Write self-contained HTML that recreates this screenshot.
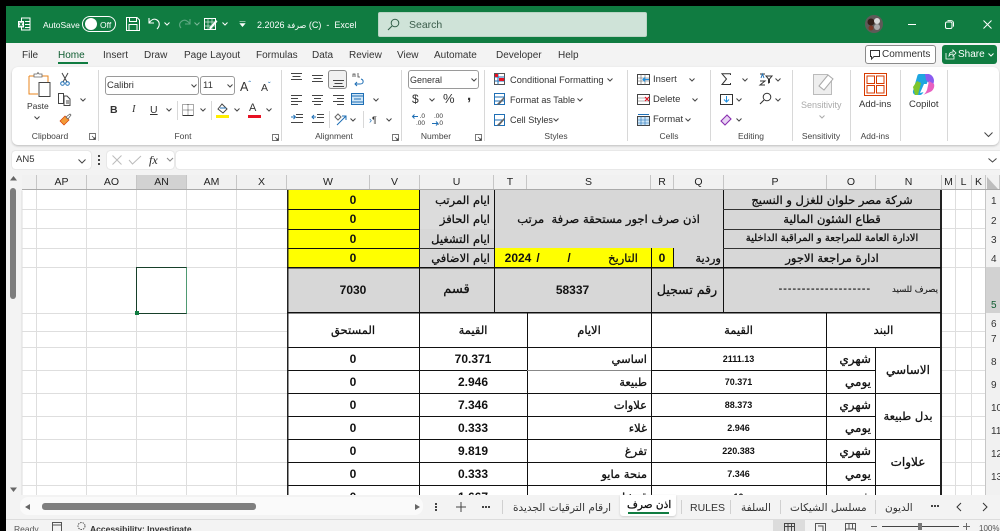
<!DOCTYPE html>
<html lang="en"><head><meta charset="utf-8"><title>Excel</title>
<style>
html,body{margin:0;padding:0;width:1000px;height:531px;overflow:hidden;background:#f3f3f3}
body{position:relative;font-family:"Liberation Sans",sans-serif;color:#222}
.a{position:absolute}
.t{position:absolute;white-space:nowrap;line-height:12px;font-size:9.5px;color:#333}
.m{position:absolute;white-space:nowrap;top:50px;line-height:12px;font-size:10px;color:#333}
.g{position:absolute;white-space:nowrap;top:131px;line-height:11px;font-size:8.5px;color:#444;transform:translateX(-50%)}
.s{position:absolute;width:1px;top:70px;height:71px;background:#d8d8d8}
.h{position:absolute;top:175px;height:15px;line-height:15px;text-align:center;font-size:10.5px;color:#222;background:#f1f1f1;border-right:1px solid #c6c6c6;box-sizing:border-box;overflow:hidden}
.r{position:absolute;left:986px;width:14px;text-align:left;padding-left:5px;box-sizing:border-box;font-size:10px;color:#333;background:#f1f1f1;line-height:12px;overflow:hidden;white-space:nowrap}
.c{position:absolute;display:flex;align-items:center;justify-content:center;box-sizing:border-box;font-family:"DejaVu Sans","Liberation Sans",sans-serif;font-weight:normal;-webkit-text-stroke:.3px #111;color:#111;font-size:11.5px;white-space:nowrap;overflow:hidden;direction:rtl}
.n{font-family:"Liberation Sans",sans-serif;font-weight:bold;font-size:12px;color:#111;direction:ltr;-webkit-text-stroke:0}
.p{font-family:"Liberation Sans",sans-serif;font-weight:bold;font-size:9px;color:#111;direction:ltr;-webkit-text-stroke:0}
.gr{background:#d7d7d7}.ye{background:#ffff00}
.rt{justify-content:flex-start;padding-right:4px}
.ar{font-family:"DejaVu Sans","Liberation Sans",sans-serif}
.tab{position:absolute;top:501px;height:16px;line-height:15px;font-size:10.5px;color:#333;white-space:nowrap;font-family:"DejaVu Sans","Liberation Sans",sans-serif;direction:rtl}
svg{position:absolute;overflow:visible}
.bl{fill:none;stroke:#444;stroke-width:1}
.ch{fill:none;stroke:#444;stroke-width:1}
</style></head><body>

<!-- title bar -->
<div class="a" style="left:0;top:0;width:1000px;height:6px;background:#000"></div>
<div class="a" style="left:6px;top:6px;width:994px;height:37px;background:#107c41"></div>
<svg style="left:17px;top:17px" width="14" height="14" viewBox="0 0 14 14"><rect x="4.5" y="1" width="8.5" height="12" fill="none" stroke="#fff"/><rect x="1" y="4" width="6" height="6.5" fill="#fff"/><path d="M8 4.5h5M8 7.5h5M8 10.5h5" stroke="#fff"/><path d="M2.6 5.4l2.8 3.8M5.4 5.4l-2.8 3.8" stroke="#107c41"/></svg>
<div class="t" style="left:43px;top:19px;color:#fff;font-size:8.5px">AutoSave</div>
<div class="a" style="left:82px;top:16px;width:34px;height:16px;border:1px solid #fff;border-radius:9px;box-sizing:border-box"></div>
<div class="a" style="left:85px;top:18px;width:12px;height:12px;border-radius:50%;background:#fff"></div>
<div class="t" style="left:100px;top:19px;color:#fff;font-size:8.5px">Off</div>
<svg style="left:126px;top:17px" width="14" height="14" viewBox="0 0 14 14"><path d="M.5.5h10.5l2.5 2.5v10.5H.5z M3.5.5v4h7v-4 M3 13.5v-6h8v6" fill="none" stroke="#fff"/></svg>
<svg style="left:148px;top:17px" width="14" height="14" viewBox="0 0 14 14"><path d="M1 1v5h5M1 6c2-3 5-5 8-3 3 2 3 6 0 9" fill="none" stroke="#fff" stroke-width="1.1"/></svg>
<svg style="left:164px;top:22px" width="6" height="4"><path d="M.5.5L3 3 5.5.5" fill="none" stroke="#fff"/></svg>
<svg style="left:178px;top:17px" width="13" height="14" viewBox="0 0 13 14"><path d="M12 2v5H7M12 7C10 4 7 2 4 4 1 6 1 9 3 11" fill="none" stroke="#5fa883" stroke-width="1.1"/></svg>
<svg style="left:194px;top:22px" width="6" height="4"><path d="M.5.5L3 3 5.5.5" fill="none" stroke="#7fb89a"/></svg>
<svg style="left:204px;top:18px" width="14" height="13" viewBox="0 0 14 13"><rect x=".5" y=".5" width="11" height="11" fill="none" stroke="#fff"/><path d="M.5 4h11M4 .5v11M8 .5v11M.5 8h11" stroke="#cfe3d8" stroke-width=".7"/><path d="M5 10l7-8 1.5 1.5-7 8z" fill="#fff"/></svg>
<svg style="left:222px;top:22px" width="6" height="4"><path d="M.5.5L3 3 5.5.5" fill="none" stroke="#fff"/></svg>
<svg style="left:239px;top:21px" width="7" height="6"><path d="M.5.5h6M1 2.5h5L3.5 5.5z" fill="#fff" stroke="#fff" stroke-width=".6"/></svg>
<div class="t" style="left:257px;top:19px;color:#fff;font-size:9px;font-family:'Liberation Sans','DejaVu Sans',sans-serif">2.2026 <span class="ar" style="font-size:8px">صرفة</span> (C) &nbsp;-&nbsp; Excel</div>
<div class="a" style="left:378px;top:12px;width:269px;height:25px;background:#cfe3d8;border:1px solid #b9d4c4;border-radius:2px;box-sizing:border-box"></div>
<svg style="left:387px;top:18px" width="13" height="13" viewBox="0 0 13 13"><circle cx="8" cy="5" r="3.8" fill="none" stroke="#33604a" stroke-width="1"/><path d="M5 8L1 12" stroke="#33604a" stroke-width="1.1"/></svg>
<div class="t" style="left:409px;top:19px;color:#3a5c4a;font-size:10.5px">Search</div>
<svg style="left:865px;top:15px" width="18" height="18" viewBox="0 0 18 18"><circle cx="9" cy="9" r="9" fill="#5f5a58"/><circle cx="6" cy="7" r="3.5" fill="#33211a"/><circle cx="12" cy="6" r="3" fill="#d9d9d9"/><circle cx="12" cy="12" r="3" fill="#aaa"/><circle cx="6" cy="13" r="2.5" fill="#7b3a28"/></svg>
<div class="a" style="left:908px;top:24px;width:8px;height:1px;background:#fff"></div>
<svg style="left:945px;top:20px" width="9" height="9"><rect x=".5" y="2" width="6.5" height="6.5" rx="1.5" fill="none" stroke="#fff"/><path d="M2.5.6h3.5a2.5 2.5 0 0 1 2.5 2.5v3.5" fill="none" stroke="#fff"/></svg>
<svg style="left:983px;top:20px" width="9" height="9"><path d="M.5.5l8 8M8.5.5l-8 8" stroke="#fff" stroke-width="1"/></svg>

<!-- black left strip -->
<div class="a" style="left:0;top:0;width:6px;height:531px;background:#000;z-index:5"></div>

<!-- menu -->
<div class="m" style="left:22px">File</div>
<div class="m" style="left:58px;color:#0e5c30">Home</div>
<div class="a" style="left:58px;top:62px;width:30px;height:2px;background:#107c41"></div>
<div class="m" style="left:103px">Insert</div><div class="m" style="left:144px">Draw</div>
<div class="m" style="left:184px">Page Layout</div><div class="m" style="left:256px">Formulas</div>
<div class="m" style="left:312px">Data</div><div class="m" style="left:349px">Review</div>
<div class="m" style="left:397px">View</div><div class="m" style="left:434px">Automate</div>
<div class="m" style="left:496px">Developer</div><div class="m" style="left:558px">Help</div>
<div class="a" style="left:865px;top:45px;width:71px;height:19px;background:#fff;border:1px solid #8a8a8a;border-radius:3px;box-sizing:border-box"></div>
<svg style="left:870px;top:50px" width="11" height="10"><path d="M.5.5h9v6H4L1.5 9V6.5H.5z" fill="none" stroke="#333"/></svg>
<div class="t" style="left:882px;top:49px;font-size:10px">Comments</div>
<div class="a" style="left:942px;top:45px;width:55px;height:19px;background:#107c41;border-radius:3px"></div>
<svg style="left:945px;top:49px" width="11" height="11"><path d="M1 4v6h8V7M4 7c0-3 2-4 4-4V1l3 3-3 3V5C6 5 5 5.5 4 7z" fill="none" stroke="#fff" stroke-width=".8"/></svg>
<div class="t" style="left:958px;top:49px;font-size:10px;color:#fff">Share</div>
<svg style="left:988px;top:53px" width="6" height="4"><path d="M.5.5L3 3 5.5.5" fill="none" stroke="#fff"/></svg>

<!-- ribbon -->
<div class="a" style="left:12px;top:67px;width:987px;height:78px;background:#fff;border-radius:6px;box-shadow:0 1px 2px #bbb"></div>
<div class="s" style="left:98px"></div><div class="s" style="left:281px"></div><div class="s" style="left:401px"></div><div class="s" style="left:484px"></div><div class="s" style="left:627px"></div><div class="s" style="left:710px"></div><div class="s" style="left:792px"></div><div class="s" style="left:850px"></div><div class="s" style="left:900px"></div><div class="s" style="left:947px"></div>

<!-- clipboard -->
<svg style="left:28px;top:72px" width="24" height="26" viewBox="0 0 24 26"><path d="M1 4h19v6M1 4v18h9" fill="none" stroke="#e8861e" stroke-width="1"/><path d="M6 5V2h3l1-1.5 1 1.5h3v3z" fill="#fff" stroke="#666" stroke-width=".8"/><rect x="11" y="10.5" width="11" height="14" fill="#fff" stroke="#444"/></svg>
<div class="t" style="left:27px;top:100px;font-size:8.5px">Paste</div>
<svg class="ch" style="left:34px;top:116px" width="6" height="4"><path d="M.5.5L3 3 5.5.5"/></svg>
<svg style="left:60px;top:73px" width="10" height="13"><path d="M2 0l5 9M8 0L3 9" stroke="#444" fill="none"/><circle cx="2.5" cy="10.5" r="1.8" fill="none" stroke="#1f6fb5"/><circle cx="7.5" cy="10.5" r="1.8" fill="none" stroke="#1f6fb5"/></svg>
<svg class="bl" style="left:58px;top:93px" width="14" height="13"><path d="M.5.5h5v10h-5z"/><path d="M6 3h3l3 3v6.5H6z" fill="#fff"/><path d="M8 8h3M8 10h3"/></svg>
<svg class="ch" style="left:80px;top:98px" width="6" height="4"><path d="M.5.5L3 3 5.5.5"/></svg>
<svg style="left:59px;top:113px" width="13" height="13"><path d="M1 8l5-5 4 4-5 5z" fill="#f29b38" stroke="#d83b01" stroke-width=".7"/><path d="M7 4l4-3 1 1-3 4z" fill="#fff" stroke="#555" stroke-width=".7"/></svg>
<div class="g" style="left:50px">Clipboard</div>
<svg class="bl" style="left:89px;top:133px" width="7" height="7"><path d="M.5 6.5v-6h6v6zM3 3l3 3M4 6h2V4" stroke-width=".7"/></svg>

<!-- font -->
<div class="a" style="left:105px;top:76px;width:94px;height:19px;border:1px solid #9a9a9a;border-radius:3px;box-sizing:border-box"></div>
<div class="t" style="left:107px;top:80px;font-size:9.5px">Calibri</div>
<svg class="ch" style="left:191px;top:84px" width="6" height="4"><path d="M.5.5L3 3 5.5.5"/></svg>
<div class="a" style="left:200px;top:76px;width:35px;height:19px;border:1px solid #9a9a9a;border-radius:3px;box-sizing:border-box"></div>
<div class="t" style="left:203px;top:80px;font-size:9.5px">11</div>
<svg class="ch" style="left:227px;top:84px" width="6" height="4"><path d="M.5.5L3 3 5.5.5"/></svg>
<div class="t" style="left:240px;top:77px;font-size:12.5px;line-height:15px">A<span style="font-size:8px;vertical-align:4px;color:#1f6fb5">ˆ</span></div>
<div class="t" style="left:261px;top:79px;font-size:10.5px;line-height:13px">A<span style="font-size:8px;vertical-align:3px;color:#1f6fb5">ˇ</span></div>
<div class="t" style="left:110px;top:104px;font-size:10.5px;font-weight:bold">B</div>
<div class="t" style="left:132px;top:104px;font-size:10.5px;font-style:italic;font-family:'Liberation Serif',serif">I</div>
<div class="t" style="left:150px;top:104px;font-size:10.5px;text-decoration:underline">U</div>
<svg class="ch" style="left:166px;top:108px" width="6" height="4"><path d="M.5.5L3 3 5.5.5"/></svg>
<div class="a" style="left:177px;top:101px;width:1px;height:19px;background:#d8d8d8"></div>
<svg style="left:182px;top:104px" width="12" height="12"><rect x=".5" y=".5" width="11" height="11" fill="none" stroke="#555" stroke-dasharray="1 1"/><path d="M.5 6h11M6 .5v11" stroke="#555" stroke-dasharray="1 1"/><path d="M.5 11.5h11" stroke="#333"/></svg>
<svg class="ch" style="left:200px;top:108px" width="6" height="4"><path d="M.5.5L3 3 5.5.5"/></svg>
<div class="a" style="left:211px;top:101px;width:1px;height:19px;background:#d8d8d8"></div>
<svg style="left:217px;top:103px" width="12" height="11"><path d="M1 6l4-5 5 5-4 4z" fill="#fff" stroke="#444"/><path d="M3 5h6" stroke="#1f6fb5"/></svg>
<div class="a" style="left:216px;top:115px;width:13px;height:3px;background:#ffee00"></div>
<svg class="ch" style="left:234px;top:108px" width="6" height="4"><path d="M.5.5L3 3 5.5.5"/></svg>
<div class="t" style="left:249px;top:102px;font-size:11px">A</div>
<div class="a" style="left:248px;top:115px;width:13px;height:3px;background:#e81123"></div>
<svg class="ch" style="left:266px;top:108px" width="6" height="4"><path d="M.5.5L3 3 5.5.5"/></svg>
<div class="g" style="left:183px">Font</div>
<svg class="bl" style="left:272px;top:134px" width="7" height="7"><path d="M.5 6.5v-6h6v6zM3 3l3 3M4 6h2V4" stroke-width=".7"/></svg>

<!-- alignment -->
<div class="a" style="left:328px;top:70px;width:19px;height:19px;border:1px solid #888;border-radius:3px;background:#f0f0f0;box-sizing:border-box"></div>
<svg style="left:290px;top:73px" width="60" height="52" stroke="#444" fill="none"><path d="M1 .5h11M2.5 3.5h8M1 6.5h11"/><path d="M22 2.5h11M23.5 5.5h8M22 8.5h11"/><path d="M43 7.5h11M44.5 10.5h8M43 13.5h11"/><path d="M1 22.5h11M1 25.5h7M1 28.5h11M1 31.5h7"/><path d="M22 22.5h11M24 25.5h7M22 28.5h11M24 31.5h7"/><path d="M43 22.5h11M47 25.5h7M43 28.5h11M47 31.5h7"/><path d="M6 41.5h7M6 44.5h7M1 49.5h12"/><path d="M1 44h4M3.5 42l2 2-2 2" stroke="#1f6fb5"/><path d="M27 41.5h7M27 44.5h7M22 49.5h12"/><path d="M26 44h-4M24 42l-2 2 2 2" stroke="#1f6fb5"/></svg>
<svg style="left:352px;top:72px" width="12" height="14"><path d="M9 7c3 1 3 5-1 5H3M5 10l-2 2 2 2" fill="none" stroke="#1f6fb5"/><path d="M1 5V2h2v3M6 1v4h2" fill="none" stroke="#444" stroke-width=".8"/></svg>
<svg style="left:351px;top:93px" width="13" height="12"><rect x=".5" y=".5" width="12" height="11" fill="#cfe6f7" stroke="#1f6fb5"/><path d="M.5 3h12M.5 9h12M3 6h7" stroke="#1f6fb5"/></svg>
<svg class="ch" style="left:373px;top:98px" width="6" height="4"><path d="M.5.5L3 3 5.5.5"/></svg>
<div class="a" style="left:329px;top:111px;width:1px;height:17px;background:#d8d8d8"></div>
<svg style="left:334px;top:113px" width="13" height="13"><path d="M1 4l3-3 3 3-3 3z" fill="none" stroke="#666"/><path d="M3 12L12 3M8 3h4v4" fill="none" stroke="#1f6fb5"/></svg>
<svg class="ch" style="left:350px;top:118px" width="6" height="4"><path d="M.5.5L3 3 5.5.5"/></svg>
<div class="a" style="left:363px;top:111px;width:1px;height:17px;background:#d8d8d8"></div>
<div class="t" style="left:369px;top:114px;font-size:9px"><span style="color:#1f6fb5">›</span>¶</div>
<svg class="ch" style="left:386px;top:118px" width="6" height="4"><path d="M.5.5L3 3 5.5.5"/></svg>
<div class="g" style="left:334px">Alignment</div>
<svg class="bl" style="left:392px;top:134px" width="7" height="7"><path d="M.5 6.5v-6h6v6zM3 3l3 3M4 6h2V4" stroke-width=".7"/></svg>

<!-- number -->
<div class="a" style="left:408px;top:70px;width:71px;height:19px;border:1px solid #9a9a9a;border-radius:3px;box-sizing:border-box"></div>
<div class="t" style="left:410px;top:74px;font-size:9px">General</div>
<svg class="ch" style="left:471px;top:78px" width="6" height="4"><path d="M.5.5L3 3 5.5.5"/></svg>
<div class="t" style="left:412px;top:92px;font-size:12px;line-height:14px">$</div>
<svg class="ch" style="left:429px;top:98px" width="6" height="4"><path d="M.5.5L3 3 5.5.5"/></svg>
<div class="t" style="left:443px;top:92px;font-size:13px;line-height:14px">%</div>
<div class="t" style="left:467px;top:89px;font-size:15px;line-height:14px;font-weight:bold">,</div>
<div class="t" style="left:416px;top:113px;font-size:6.5px;line-height:7px">&nbsp;&nbsp;.0<br>.00</div>
<div class="t" style="left:434px;top:113px;font-size:6.5px;line-height:7px">.00<br>&nbsp;&nbsp;.0</div>
<svg style="left:411px;top:114px" width="34" height="12"><path d="M7 2.5H1.5M3.5.5l-2 2 2 2" fill="none" stroke="#1f6fb5"/><path d="M21 9.5h6M25 7.5l2 2-2 2" fill="none" stroke="#1f6fb5"/></svg>
<div class="g" style="left:436px">Number</div>
<svg class="bl" style="left:475px;top:134px" width="7" height="7"><path d="M.5 6.5v-6h6v6zM3 3l3 3M4 6h2V4" stroke-width=".7"/></svg>

<!-- styles -->
<svg style="left:494px;top:73px" width="11" height="12"><rect x=".5" y=".5" width="10" height="11" fill="#fff" stroke="#555"/><path d="M.5 4h10M.5 8h10M4 .5v11" stroke="#1f6fb5"/><rect x="1" y="1" width="3" height="3" fill="#e81123"/><rect x="5" y="5" width="5" height="3" fill="#e81123"/></svg>
<svg style="left:494px;top:93px" width="11" height="12"><rect x=".5" y=".5" width="10" height="11" fill="#fff" stroke="#1f6fb5"/><path d="M.5 4h10M.5 8h10" stroke="#1f6fb5"/><path d="M3 11l7-7 1 1-6 7z" fill="#666"/></svg>
<svg style="left:494px;top:114px" width="11" height="12"><rect x=".5" y=".5" width="10" height="11" fill="#fff" stroke="#1f6fb5"/><path d="M.5 6h10" stroke="#1f6fb5"/><path d="M3 11l7-7 1 1-6 7z" fill="#666"/></svg>
<div class="t" style="left:510px;top:74px;font-size:9.3px">Conditional Formatting</div>
<svg class="ch" style="left:607px;top:78px" width="6" height="4"><path d="M.5.5L3 3 5.5.5"/></svg>
<div class="t" style="left:510px;top:94px;font-size:9.1px">Format as Table</div>
<svg class="ch" style="left:577px;top:98px" width="6" height="4"><path d="M.5.5L3 3 5.5.5"/></svg>
<div class="t" style="left:510px;top:114px;font-size:9.1px">Cell Styles</div>
<svg class="ch" style="left:553px;top:118px" width="6" height="4"><path d="M.5.5L3 3 5.5.5"/></svg>
<div class="g" style="left:556px">Styles</div>

<!-- cells -->
<svg style="left:637px;top:74px" width="13" height="11"><rect x=".5" y=".5" width="12" height="10" fill="#fff" stroke="#444"/><path d="M.5 4h12M.5 7h12M4 .5v10M8 .5v10" stroke="#666" stroke-width=".6"/><path d="M6 5.5h6M8 3.5l-2 2 2 2" fill="none" stroke="#1f8fe0" stroke-width="1.2"/></svg>
<svg style="left:637px;top:94px" width="13" height="11"><rect x=".5" y=".5" width="12" height="10" fill="#fff" stroke="#444"/><path d="M.5 4h12M.5 7h12" stroke="#666" stroke-width=".6"/><path d="M8 3l4 4M12 3L8 7" stroke="#e81123" stroke-width="1.1"/></svg>
<svg style="left:637px;top:114px" width="13" height="12"><rect x=".5" y="2.5" width="12" height="9" fill="#cfe6f7" stroke="#444"/><path d="M.5 6h12M.5 9h12M4 2.5v9M8 2.5v9" stroke="#1f6fb5" stroke-width=".6"/><path d="M1 .5h11" stroke="#1f6fb5"/></svg>
<div class="t" style="left:653px;top:74px;font-size:9.5px">Insert</div>
<svg class="ch" style="left:689px;top:78px" width="6" height="4"><path d="M.5.5L3 3 5.5.5"/></svg>
<div class="t" style="left:653px;top:94px;font-size:9.5px">Delete</div>
<svg class="ch" style="left:692px;top:98px" width="6" height="4"><path d="M.5.5L3 3 5.5.5"/></svg>
<div class="t" style="left:653px;top:114px;font-size:9.5px">Format</div>
<svg class="ch" style="left:685px;top:118px" width="6" height="4"><path d="M.5.5L3 3 5.5.5"/></svg>
<div class="g" style="left:669px">Cells</div>

<!-- editing -->
<svg style="left:721px;top:73px" width="11" height="13"><path d="M9.5 2V.8H1l4.5 5.2L1 11.5h8.5V10" fill="none" stroke="#333"/></svg>
<svg class="ch" style="left:742px;top:78px" width="6" height="4"><path d="M.5.5L3 3 5.5.5"/></svg>
<svg style="left:759px;top:73px" width="13" height="13"><path d="M1 1h5M1 8h5L1 12h5" fill="none" stroke="#333"/><path d="M7 3h6l-2.5 3v3.5L9.5 10V6z" fill="none" stroke="#333"/><path d="M2 5l1.5-4L5 5" fill="none" stroke="#1f6fb5"/></svg>
<svg class="ch" style="left:775px;top:78px" width="6" height="4"><path d="M.5.5L3 3 5.5.5"/></svg>
<svg style="left:720px;top:94px" width="13" height="11"><rect x=".5" y=".5" width="12" height="10" fill="#fff" stroke="#333"/><path d="M6.5 2v6M4 5.5l2.5 2.5L9 5.5" fill="none" stroke="#1f8fe0"/></svg>
<svg class="ch" style="left:736px;top:98px" width="6" height="4"><path d="M.5.5L3 3 5.5.5"/></svg>
<svg style="left:759px;top:92px" width="13" height="13"><circle cx="8" cy="5" r="3.8" fill="none" stroke="#333"/><path d="M5 8l-4 4" stroke="#333" stroke-width="1.1"/></svg>
<svg class="ch" style="left:775px;top:98px" width="6" height="4"><path d="M.5.5L3 3 5.5.5"/></svg>
<svg style="left:720px;top:114px" width="12" height="12"><path d="M1 7l6-6 4 4-6 6z" fill="#e8d4f4" stroke="#8a2fb0" stroke-width="1.1"/></svg>
<svg class="ch" style="left:736px;top:118px" width="6" height="4"><path d="M.5.5L3 3 5.5.5"/></svg>
<div class="g" style="left:751px">Editing</div>

<!-- sensitivity -->
<svg style="left:813px;top:72px" width="22" height="24"><path d="M.5 2.5h14l4 4v16H.5z" fill="#eee" stroke="#bbb"/><path d="M6 14l9-11 5 4-9 11z" fill="#fff" stroke="#aaa"/></svg>
<div class="t" style="left:801px;top:99px;font-size:9px;color:#aaa">Sensitivity</div>
<svg style="left:819px;top:115px" width="6" height="4"><path d="M.5.5L3 3 5.5.5" fill="none" stroke="#aaa"/></svg>
<div class="g" style="left:821px">Sensitivity</div>

<!-- addins -->
<svg style="left:864px;top:73px" width="23" height="23"><rect x=".5" y=".5" width="22" height="22" fill="#fff" stroke="#d83b01"/><rect x="3" y="3" width="7.5" height="7.5" fill="none" stroke="#d83b01"/><rect x="12.5" y="3" width="7.5" height="7.5" fill="none" stroke="#d83b01"/><rect x="3" y="12.5" width="7.5" height="7.5" fill="none" stroke="#d83b01"/><rect x="12.5" y="12.5" width="7.5" height="7.5" fill="none" stroke="#d83b01"/></svg>
<div class="t" style="left:859px;top:99px;font-size:9.5px">Add-ins</div>
<div class="g" style="left:875px">Add-ins</div>

<!-- copilot -->
<svg style="left:912px;top:73px" width="23" height="23" viewBox="0 0 23 23"><path d="M7 1h9c2 0 2 2 1 4l-5 13c-1 2-2 4-4 4H4C2 22 .5 20 1 18L5 4c.4-2 1-3 2-3z" fill="#1fa6e0"/><path d="M1 14l4-6 4 2-3 12H3z" fill="#7ec52e"/><path d="M13 1h3c3 0 6 3 6 7l-1 6-7-7z" fill="#8a5cf0"/><path d="M17 8l5 3c1 3-1 7-4 8l-7 3c2-1 3-3 4-5z" fill="#e860c0"/><path d="M8 20l4-9h3l-3 8z" fill="#fff"/></svg>
<div class="t" style="left:909px;top:99px;font-size:9.5px">Copilot</div>
<svg class="ch" style="left:984px;top:132px" width="9" height="6"><path d="M.5.5L4.5 4.5 8.5.5"/></svg>

<!-- formula bar -->
<div class="a" style="left:12px;top:151px;width:79px;height:18px;background:#fff;border-radius:3px;box-shadow:0 0 1px #aaa"></div>
<div class="t" style="left:16px;top:154px;font-size:9.5px">AN5</div>
<svg class="ch" style="left:78px;top:159px" width="8" height="5"><path d="M.5.5L4 4 7.5.5"/></svg>
<div class="a" style="left:98px;top:155px;width:2px;height:2px;background:#444;box-shadow:0 4px #444,0 8px #444"></div>
<div class="a" style="left:107px;top:151px;width:67px;height:18px;background:#fff;border-radius:3px;box-shadow:0 0 1px #aaa"></div>
<svg style="left:112px;top:155px" width="62" height="11" fill="none"><path d="M.5.5l9 9M9.5.5l-9 9" stroke="#bbb"/><path d="M17 5l3.5 4L29 1" stroke="#bbb"/><path d="M55 3l3 3 3-3" stroke="#888"/></svg>
<div class="t" style="left:149px;top:153px;font-size:12px;line-height:14px;font-style:italic;font-family:'Liberation Serif',serif;color:#222">fx</div>
<div class="a" style="left:176px;top:151px;width:824px;height:18px;background:#fff;border-radius:3px 0 0 3px;box-shadow:0 0 1px #aaa"></div>
<svg class="ch" style="left:988px;top:158px" width="9" height="5"><path d="M.5.5L4.5 4 8.5.5"/></svg>

<!-- scrollbar left -->
<svg style="left:10px;top:176px" width="7" height="5"><path d="M3.5 0L7 4.5H0z" fill="#666"/></svg>
<div class="a" style="left:10px;top:188px;width:6px;height:111px;background:#7d7d7d;border-radius:3px"></div>
<svg style="left:10px;top:487px" width="7" height="5"><path d="M3.5 5L7 .5H0z" fill="#666"/></svg>

<!-- grid background -->
<div class="a" style="left:22px;top:190px;width:964px;height:305px;background:#fff"></div>
<svg style="left:0;top:0" width="1000" height="531"><g stroke="#dedede" stroke-width="1" shape-rendering="crispEdges"><path d="M22 190.5V495M36.5 190V495M86.5 190V495M136.5 190V495M186.5 190V495M236.5 190V495M941.5 190V495M955.5 190V495M971.5 190V495M985.5 190V495"/><path d="M22 209.5H287M22 228.5H287M22 248.5H287M22 267.5H287M22 313.5H287M22 331.5H287M22 347.5H287M22 370.5H287M22 393.5H287M22 416.5H287M22 439.5H287M22 462.5H287M22 485.5H287"/><path d="M942 209.5H986M942 228.5H986M942 248.5H986M942 267.5H986M942 313.5H986M942 331.5H986M942 347.5H986M942 370.5H986M942 393.5H986M942 416.5H986M942 439.5H986M942 462.5H986M942 485.5H986"/></g></svg>

<!-- column headers -->
<div class="h" style="left:22px;width:15px"></div>
<div class="h" style="left:37px;width:50px">AP</div><div class="h" style="left:87px;width:50px">AO</div>
<div class="h" style="left:137px;width:50px;background:#d2d2d2;border-bottom:1px solid #107c41">AN</div>
<div class="h" style="left:187px;width:50px">AM</div><div class="h" style="left:237px;width:50px">X</div>
<div class="h" style="left:287px;width:83px">W</div><div class="h" style="left:370px;width:50px">V</div>
<div class="h" style="left:420px;width:74px">U</div><div class="h" style="left:494px;width:33px">T</div>
<div class="h" style="left:527px;width:124px">S</div><div class="h" style="left:651px;width:23px">R</div>
<div class="h" style="left:674px;width:50px">Q</div><div class="h" style="left:724px;width:103px">P</div>
<div class="h" style="left:827px;width:49px">O</div><div class="h" style="left:876px;width:66px">N</div>
<div class="h" style="left:942px;width:14px">M</div><div class="h" style="left:956px;width:16px">L</div>
<div class="h" style="left:972px;width:14px">K</div><div class="h" style="left:986px;width:14px"></div>
<svg style="left:987px;top:177px" width="11" height="12"><path d="M0 0L11 12H0z" fill="#bdbdbd"/></svg>
<div class="a" style="left:22px;top:189px;width:978px;height:1px;background:#aaa"></div>

<!-- row headers -->
<div class="r" style="top:190px;height:19px;padding-top:6px">1</div>
<div class="r" style="top:209px;height:19px;padding-top:7px">2</div>
<div class="r" style="top:228px;height:20px;padding-top:7px">3</div>
<div class="r" style="top:248px;height:19px;padding-top:6px">4</div>
<div class="r" style="top:267px;height:46px;padding-top:33px;background:#d2d2d2;color:#0e5c30">5</div>
<div class="r" style="top:313px;height:18px;padding-top:6px">6</div>
<div class="r" style="top:331px;height:16px;padding-top:3px">7</div>
<div class="r" style="top:347px;height:23px;padding-top:10px">8</div>
<div class="r" style="top:370px;height:23px;padding-top:10px">9</div>
<div class="r" style="top:393px;height:23px;padding-top:10px">10</div>
<div class="r" style="top:416px;height:23px;padding-top:10px">11</div>
<div class="r" style="top:439px;height:23px;padding-top:10px">12</div>
<div class="r" style="top:462px;height:23px;padding-top:10px">13</div>
<div class="r" style="top:485px;height:10px"></div>
<div class="a" style="left:985px;top:190px;width:1px;height:305px;background:#c6c6c6"></div>

<!-- selected cell -->
<div class="a" style="left:136px;top:267px;width:51px;height:47px;border:1px solid #17402a;border-right-color:#4f9a72;box-sizing:border-box"></div>
<div class="a" style="left:135px;top:311px;width:4px;height:4px;background:#107c41"></div>

<!-- sheet -->
<div class="a" style="left:287px;top:190px;width:655px;height:305px;background:#fff;overflow:hidden">
<div class="c ye n" style="left:0;top:0;width:132px;height:19px">0</div>
<div class="c ye n" style="left:0;top:19px;width:132px;height:20px">0</div>
<div class="c ye n" style="left:0;top:39px;width:132px;height:19px">0</div>
<div class="c ye n" style="left:0;top:58px;width:132px;height:19px">0</div>
<div class="c gr rt" style="left:132px;top:0;width:75px;height:19px;background:#dcdcdc">ايام المرتب</div>
<div class="c gr rt" style="left:132px;top:19px;width:75px;height:20px;background:#dcdcdc">ايام الحافز</div>
<div class="c gr rt" style="left:132px;top:39px;width:75px;height:19px">ايام التشغيل</div>
<div class="c gr rt" style="left:132px;top:58px;width:75px;height:19px">ايام الاضافي</div>
<div class="c gr" style="left:207px;top:0;width:229px;height:58px">اذن صرف اجور مستحقة صرفة &nbsp;مرتب</div>
<div class="c ye" style="left:207px;top:58px;width:157px;height:19px"></div>
<div class="c n" style="left:216px;top:58px;width:30px;height:19px;background:#ffff00">2024</div>
<div class="c n" style="left:248px;top:58px;width:6px;height:19px;background:#ffff00">/</div>
<div class="c n" style="left:279px;top:58px;width:6px;height:19px;background:#ffff00">/</div>
<div class="c" style="left:318px;top:58px;width:36px;height:19px;background:#ffff00">التاريخ</div>
<div class="c ye n" style="left:364px;top:58px;width:22px;height:19px">0</div>
<div class="c gr rt" style="left:386px;top:58px;width:50px;height:19px;padding-right:2px">وردية</div>
<div class="c gr" style="left:436px;top:0;width:218px;height:19px">شركة مصر حلوان للغزل و النسيج</div>
<div class="c gr" style="left:436px;top:19px;width:218px;height:20px">قطاع الشئون المالية</div>
<div class="c gr" style="left:436px;top:39px;width:218px;height:19px;font-size:10px">الادارة العامة للمراجعة و المراقبة الداخلية</div>
<div class="c gr" style="left:436px;top:58px;width:218px;height:19px">ادارة مراجعة الاجور</div>
<div class="c gr n" style="left:0;top:77px;width:132px;height:45px">7030</div>
<div class="c gr" style="left:132px;top:77px;width:75px;height:45px;font-size:13px">قسم</div>
<div class="c gr n" style="left:207px;top:77px;width:157px;height:45px">58337</div>
<div class="c gr" style="left:364px;top:77px;width:72px;height:45px;font-size:12.5px">رقم تسجيل</div>
<div class="c gr" style="left:436px;top:77px;width:218px;height:45px"></div>
<div class="c" style="left:488px;top:92px;width:100px;height:15px;direction:ltr;font-family:'Liberation Sans',sans-serif;font-size:10px;letter-spacing:1.3px;background:#d7d7d7">--------------------</div>
<div class="c" style="left:600px;top:92px;width:54px;height:15px;font-size:8.5px;justify-content:flex-start;padding-right:3px;background:#d7d7d7;-webkit-text-stroke:.1px #111">يصرف للسيد</div>

<div class="c" style="left:0;top:122px;width:132px;height:35px">المستحق</div>
<div class="c" style="left:132px;top:122px;width:108px;height:35px">القيمة</div>
<div class="c" style="left:240px;top:122px;width:124px;height:35px">الايام</div>
<div class="c" style="left:364px;top:122px;width:175px;height:35px">القيمة</div>
<div class="c" style="left:539px;top:122px;width:115px;height:35px">البند</div>

<!-- data rows -->
<div class="c n" style="left:0;top:157px;width:132px;height:23px">0</div><div class="c n" style="left:132px;top:157px;width:108px;height:23px">70.371</div><div class="c rt" style="left:240px;top:157px;width:124px;height:23px">اساسي</div><div class="c p" style="left:364px;top:157px;width:175px;height:23px">2111.13</div><div class="c rt" style="left:539px;top:157px;width:49px;height:23px;font-size:12px">شهري</div>
<div class="c n" style="left:0;top:180px;width:132px;height:23px">0</div><div class="c n" style="left:132px;top:180px;width:108px;height:23px">2.946</div><div class="c rt" style="left:240px;top:180px;width:124px;height:23px">طبيعة</div><div class="c p" style="left:364px;top:180px;width:175px;height:23px">70.371</div><div class="c rt" style="left:539px;top:180px;width:49px;height:23px;font-size:12px">يومي</div>
<div class="c n" style="left:0;top:203px;width:132px;height:23px">0</div><div class="c n" style="left:132px;top:203px;width:108px;height:23px">7.346</div><div class="c rt" style="left:240px;top:203px;width:124px;height:23px">علاوات</div><div class="c p" style="left:364px;top:203px;width:175px;height:23px">88.373</div><div class="c rt" style="left:539px;top:203px;width:49px;height:23px;font-size:12px">شهري</div>
<div class="c n" style="left:0;top:226px;width:132px;height:23px">0</div><div class="c n" style="left:132px;top:226px;width:108px;height:23px">0.333</div><div class="c rt" style="left:240px;top:226px;width:124px;height:23px">غلاء</div><div class="c p" style="left:364px;top:226px;width:175px;height:23px">2.946</div><div class="c rt" style="left:539px;top:226px;width:49px;height:23px;font-size:12px">يومي</div>
<div class="c n" style="left:0;top:249px;width:132px;height:23px">0</div><div class="c n" style="left:132px;top:249px;width:108px;height:23px">9.819</div><div class="c rt" style="left:240px;top:249px;width:124px;height:23px">تفرغ</div><div class="c p" style="left:364px;top:249px;width:175px;height:23px">220.383</div><div class="c rt" style="left:539px;top:249px;width:49px;height:23px;font-size:12px">شهري</div>
<div class="c n" style="left:0;top:272px;width:132px;height:23px">0</div><div class="c n" style="left:132px;top:272px;width:108px;height:23px">0.333</div><div class="c rt" style="left:240px;top:272px;width:124px;height:23px">منحة مايو</div><div class="c p" style="left:364px;top:272px;width:175px;height:23px">7.346</div><div class="c rt" style="left:539px;top:272px;width:49px;height:23px;font-size:12px">يومي</div>
<div class="c n" style="left:0;top:295px;width:132px;height:23px">0</div><div class="c n" style="left:132px;top:295px;width:108px;height:23px">1.667</div><div class="c rt" style="left:240px;top:295px;width:124px;height:23px">قرشا</div><div class="c p" style="left:364px;top:295px;width:175px;height:23px">10</div><div class="c rt" style="left:539px;top:295px;width:49px;height:23px;font-size:12px">شهري</div>
<div class="c" style="left:588px;top:157px;width:66px;height:46px;font-size:12px">الاساسي</div>
<div class="c" style="left:588px;top:203px;width:66px;height:46px">بدل طبيعة</div>
<div class="c" style="left:588px;top:249px;width:66px;height:46px;font-size:12px">علاوات</div>

<!-- rules -->
<svg style="left:0;top:0" width="655" height="305" shape-rendering="crispEdges"><g stroke="#111" stroke-width="1"><path d="M0 19.5H132M0 39.5H132M0 58.5H132M0 77.5H654M0 122.5H654M0 157.5H654M0 180.5H240M0 203.5H654M0 226.5H588M0 249.5H654M0 272.5H588M0 295.5H654M364 180.5H588"/><path d="M132.5 0V305M207.5 0V77M240.5 122V305M364.5 58V305M386.5 58V77M436.5 0V122M539.5 122V305M588.5 157V305M207.5 77V122M364.5 77V122"/><path d="M436 19.5H654M436 39.5H654M436 58.5H654" stroke="#333"/><path d="M132 58.5H207" stroke="#333"/></g><path d="M.5 0V305M654 0V305" stroke="#222" stroke-width="2"/><path d="M0 77.5H654M0 122.5H654" stroke="#111" stroke-width="1.5"/><path d="M240 180.5H364" stroke="#888"/></svg>
</div>

<!-- sheet tabs bar -->
<div class="a" style="left:6px;top:495px;width:994px;height:24px;background:#f3f3f3"></div>
<div class="a" style="left:6px;top:519px;width:994px;height:1px;background:#dcdcdc"></div>
<div class="a" style="left:20px;top:497px;width:403px;height:18px;background:#fafafa;border-radius:8px"></div>
<svg style="left:25px;top:504px" width="5" height="6"><path d="M0 3l5-3v6z" fill="#666"/></svg>
<div class="a" style="left:42px;top:503px;width:214px;height:7px;background:#7f7f7f;border-radius:3px"></div>
<svg style="left:415px;top:504px" width="5" height="6"><path d="M5 3L0 0v6z" fill="#666"/></svg>
<div class="a" style="left:435px;top:503px;width:2px;height:2px;background:#444;box-shadow:0 3px #444,0 6px #444"></div>
<svg style="left:456px;top:502px" width="10" height="10"><path d="M5 0v10M0 5h10" stroke="#444"/></svg>
<div class="a" style="left:482px;top:506px;width:2px;height:2px;background:#444;box-shadow:3px 0 #444,6px 0 #444"></div>
<div class="tab" style="left:513px">ارقام الترقيات الجديدة</div>
<div class="a" style="left:620px;top:495px;width:56px;height:21px;background:#fff;border-radius:0 0 3px 3px;box-shadow:0 1px 2px #ccc"></div>
<div class="tab" style="left:627px;top:498px;font-size:10.5px;-webkit-text-stroke:.3px #111;color:#111">اذن صرف</div>
<div class="a" style="left:628px;top:512px;width:41px;height:2px;background:#107c41"></div>
<div class="tab" style="left:690px;font-family:'Liberation Sans',sans-serif;direction:ltr;font-size:10.5px">RULES</div>
<div class="tab" style="left:741px">السلفة</div>
<div class="tab" style="left:790px">مسلسل الشيكات</div>
<div class="tab" style="left:885px">الديون</div>
<div class="a" style="left:681px;top:500px;width:1px;height:14px;background:#d0d0d0"></div>
<div class="a" style="left:730px;top:500px;width:1px;height:14px;background:#d0d0d0"></div>
<div class="a" style="left:780px;top:500px;width:1px;height:14px;background:#d0d0d0"></div>
<div class="a" style="left:875px;top:500px;width:1px;height:14px;background:#d0d0d0"></div>
<div class="a" style="left:502px;top:500px;width:1px;height:14px;background:#d0d0d0"></div>
<div class="a" style="left:931px;top:505px;width:2px;height:2px;background:#444;box-shadow:3px 0 #444,6px 0 #444"></div>
<svg style="left:956px;top:502px" width="6" height="10"><path d="M5 1L1 5l4 4" fill="none" stroke="#333"/></svg>
<svg style="left:982px;top:502px" width="6" height="10"><path d="M1 1l4 4-4 4" fill="none" stroke="#333"/></svg>

<!-- status -->
<div class="t" style="left:14px;top:523px;font-size:8.5px;color:#555">Ready</div>
<svg style="left:52px;top:522px" width="10" height="9"><rect x=".5" y=".5" width="9" height="10" fill="none" stroke="#555"/><path d="M.5 3h9" stroke="#555"/></svg>
<svg style="left:76px;top:522px" width="11" height="9"><circle cx="5.5" cy="4" r="3.5" fill="none" stroke="#555" stroke-dasharray="1.5 1"/></svg>
<div class="t" style="left:90px;top:523px;font-size:8.5px;font-weight:bold;color:#333">Accessibility: Investigate</div>
<div class="a" style="left:773px;top:520px;width:32px;height:11px;background:#dcdcdc"></div>
<svg style="left:784px;top:523px" width="11" height="8" stroke="#444" fill="none"><path d="M.5.5h10v9H.5zM.5 3.5h10M4 .5v9M7.5 .5v9"/></svg>
<svg style="left:815px;top:523px" width="11" height="8" stroke="#555" fill="none"><path d="M.5.5h10v9H.5zM3 3h5v7"/></svg>
<svg style="left:845px;top:523px" width="11" height="8" stroke="#555" fill="none"><path d="M.5.5h10v9H.5zM4 .5v6M7.5 .5v6M.5 6h10"/></svg>
<div class="a" style="left:871px;top:526px;width:6px;height:1px;background:#666"></div>
<div class="a" style="left:882px;top:526px;width:77px;height:1px;background:#444"></div>
<div class="a" style="left:918px;top:523px;width:4px;height:7px;background:#777"></div>
<svg style="left:963px;top:523px" width="7" height="7"><path d="M3.5 0v7M0 3.5h7" stroke="#666"/></svg>
<div class="t" style="left:979px;top:523px;font-size:8px;color:#555">100%</div>

</body></html>
